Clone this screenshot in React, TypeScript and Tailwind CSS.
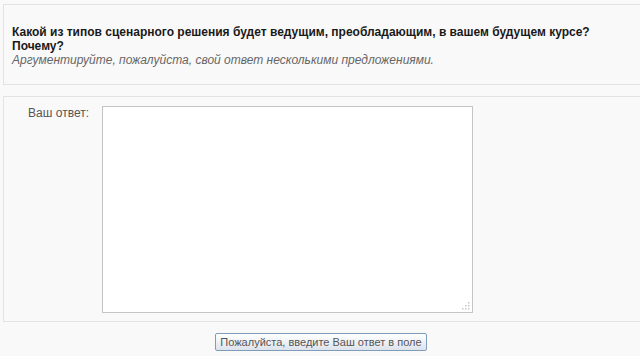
import React from "react";

export default function App() {
  return (
    <div
      className="w-[640px] h-[356px] overflow-hidden bg-[#f9f9f9] text-[#333]"
      style={{ fontFamily: '"Liberation Sans", Arial, sans-serif' }}
    >
      <div className="ml-[3px] mt-[4px] -mr-[20px] h-[81px] border border-[#e3e3e3] bg-[#f9f9f9] pl-[8px] pt-[20px]">
        <div className="w-[620px] text-[12px] leading-[14px] font-bold text-[#1a1a1a]">
          Какой из типов сценарного решения будет ведущим, преобладающим, в вашем будущем курсе? Почему?
        </div>
        <div className="text-[12px] leading-[14px] italic text-[#666]">
          Аргументируйте, пожалуйста, свой ответ несколькими предложениями.
        </div>
      </div>

      <div className="ml-[3px] mt-[11px] -mr-[20px] h-[226px] border border-[#e3e3e3] bg-[#f9f9f9] flex">
        <div className="w-[98px] shrink-0 pr-[13px] pt-[9px] text-right text-[12px] leading-[14px] text-[#555]">
          Ваш ответ:
        </div>
        <div className="pt-[9px]">
          <div className="relative w-[371px] h-[207px] border border-[#c4c4c4] bg-white">
            <svg className="absolute right-[2px] bottom-[2px]" width="8" height="8" viewBox="0 0 8 8">
              <rect x="6" y="0" width="1.5" height="1.5" fill="#c8c8c8" />
              <rect x="3" y="3" width="1.5" height="1.5" fill="#c8c8c8" />
              <rect x="6" y="3" width="1.5" height="1.5" fill="#c8c8c8" />
              <rect x="0" y="6" width="1.5" height="1.5" fill="#c8c8c8" />
              <rect x="3" y="6" width="1.5" height="1.5" fill="#c8c8c8" />
              <rect x="6" y="6" width="1.5" height="1.5" fill="#c8c8c8" />
            </svg>
          </div>
        </div>
      </div>

      <div className="mt-[11px] flex justify-center pl-[2px]">
        <button className="h-[18px] w-[212px] rounded-[2px] border border-[#7f9db9] bg-gradient-to-b from-white to-[#dde3ec] text-[11px] leading-[16px] text-[#555]">
          Пожалуйста, введите Ваш ответ в поле
        </button>
      </div>
    </div>
  );
}
